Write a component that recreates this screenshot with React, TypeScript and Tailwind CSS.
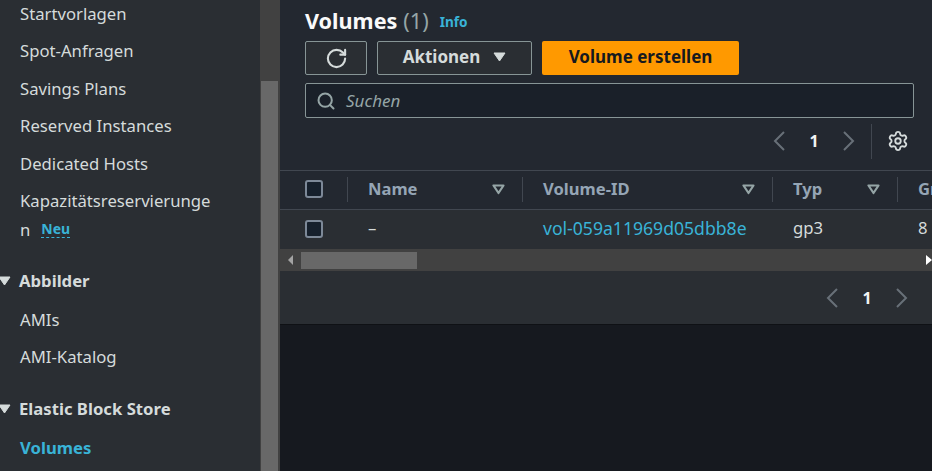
import React from "react";
import { RotateCw, Search, Settings } from "lucide-react";

const navTop = ["Startvorlagen", "Spot-Anfragen", "Savings Plans", "Reserved Instances", "Dedicated Hosts"];

const Caret = () => (
  <svg width="13" height="10" viewBox="0 0 13 10" className="shrink-0">
    <path d="M1 1h11L6.5 9z" fill="#d5dbdb" stroke="#d5dbdb" />
  </svg>
);

const SortIcon = () => (
  <svg width="13" height="11" viewBox="0 0 13 11" className="shrink-0">
    <path d="M1.5 1.5h10L6.5 9z" fill="none" stroke="#95a5a6" strokeWidth="2.2" strokeLinejoin="round" />
  </svg>
);

const Pager = () => (
  <div className="flex items-center text-[#687078]">
    <svg width="12" height="20" viewBox="0 0 12 20" fill="none" stroke="currentColor" strokeWidth="2">
      <path d="M11 1 2 10l9 9" />
    </svg>
    <span className="w-[58px] text-center text-[16px] font-bold text-[#f2f3f3]">1</span>
    <svg width="12" height="20" viewBox="0 0 12 20" fill="none" stroke="currentColor" strokeWidth="2">
      <path d="m1 1 9 9-9 9" />
    </svg>
  </div>
);

const Checkbox = () => (
  <div className="h-[18px] w-[18px] rounded-[3px] border-2 border-[#7d8998] bg-[#16202c]" />
);

const HeaderCell = ({ label, width }: { label: string; width: string }) => (
  <div className={`flex h-[25px] shrink-0 items-center justify-between border-r border-[#414750] pl-5 pr-[17px] ${width}`}>
    <span className="text-[16.6px] font-bold text-[#95a5b5]">{label}</span>
    <SortIcon />
  </div>
);

export default function App() {
  return (
    <div className="flex h-[471px] w-[932px] overflow-hidden bg-[#16191f] font-['Noto_Sans',sans-serif] text-[16.7px] text-[#d5dbdb]">
      <aside className="h-full w-[260px] shrink-0 bg-[#2a2e33]">
        <ul className="flex flex-col pl-5 pt-[0.9px]">
          {navTop.map((item) => (
            <li key={item} className="h-[37.5px] leading-[26px]">{item}</li>
          ))}
        </ul>
        <div className="-mt-[2.4px] pl-5 leading-[29px]">
          <div>Kapazitätsreservierunge</div>
          <div className="flex items-center gap-[11px]">
            <span>n</span>
            <span className="border-b border-dashed border-[#39b3d7] text-[14px] font-bold leading-[16px] text-[#39b3d7]">Neu</span>
          </div>
        </div>
        <div className="mt-[23.5px] flex h-[26px] items-center gap-[7px] font-bold">
          <span className="-ml-[2px]"><Caret /></span>
          <span className="pl-[1px]">Abbilder</span>
        </div>
        <div className="flex flex-col pl-5 pt-[13.6px]">
          <div className="h-[36.7px] leading-[26px]">AMIs</div>
          <div className="h-[37.5px] leading-[26px]">AMI-Katalog</div>
        </div>
        <div className="mt-[14.7px] flex h-[26px] items-center gap-[8px] font-bold">
          <span className="-ml-[2px]"><Caret /></span>
          <span>Elastic Block Store</span>
        </div>
        <div className="pl-5 pt-[13px] font-bold leading-[26px] text-[#39b3d7]">Volumes</div>
      </aside>

      <div className="flex h-full w-5 shrink-0 flex-col bg-[#414141]">
        <div className="h-[81px]" />
        <div className="ml-[1px] w-[17px] flex-1 bg-[#686868]" />
      </div>

      <main className="min-w-0 flex-1">
        <div className="h-[325px] overflow-hidden border-b border-[#0f1115] bg-[#2a2e33]">
          <section className="h-[170px] bg-[#232830] pl-[25px] pr-[18px] pt-[6px]">
            <div className="flex h-[32px] items-center pb-[2px]">
              <h1 className="text-[21.6px] font-bold text-[#fafafa]">Volumes</h1>
              <span className="ml-[6px] text-[21.6px] text-[#95a5a6]">(1)</span>
              <span className="ml-[11px] pt-[3px] text-[13.6px] font-bold text-[#39b3d7]">Info</span>
            </div>
            <div className="mt-[3px] flex h-[34px] gap-[10px]">
              <button className="flex w-[62px] items-center justify-center rounded-[2px] border border-[#879596] bg-[#2a2e33] text-[#d5dbdb]">
                <RotateCw size={23} strokeWidth={2.2} />
              </button>
              <button className="flex w-[155px] items-center justify-center gap-[13px] rounded-[2px] border border-[#879596] bg-[#2a2e33] pb-[2px] text-[17px] font-bold text-[#d5dbdb]">
                Aktionen
                <Caret />
              </button>
              <button className="w-[197px] rounded-[2px] bg-[#ff9900] pb-[2px] text-[17px] font-bold text-[#16191f]">
                Volume erstellen
              </button>
            </div>
            <div className="mt-[8px] flex h-[35px] items-center gap-[10px] rounded-[2px] border border-[#879596] bg-[#1a2029] pl-[10px] text-[#95a5a6]">
              <Search size={20} strokeWidth={2.4} />
              <span className="text-[17px] italic">Suchen</span>
            </div>
            <div className="mt-[5px] flex h-[36px] items-center justify-end pr-[5px]">
              <Pager />
              <div className="ml-[16px] flex h-[35px] w-[38px] items-center justify-end border-l border-[#414750]">
                <Settings size={22} strokeWidth={2} className="text-[#d5dbdb]" />
              </div>
            </div>
          </section>

          <div className="overflow-hidden border-t border-[#414750]">
            <div className="flex h-[39px] items-center border-b border-[#414750] bg-[#232830] pb-[2px]">
              <div className="flex h-[25px] w-[68px] shrink-0 items-center border-r border-[#414750] pl-[25px]">
                <Checkbox />
              </div>
              <HeaderCell label="Name" width="w-[175px]" />
              <HeaderCell label="Volume-ID" width="w-[250px]" />
              <HeaderCell label="Typ" width="w-[125px]" />
              <span className="pl-5 text-[16.6px] font-bold text-[#95a5b5]">Größe</span>
            </div>
            <div className="flex h-[39px] items-center whitespace-nowrap bg-[#2a2e33] pb-[2px]">
              <div className="w-[68px] shrink-0 pl-[25px]"><Checkbox /></div>
              <div className="w-[175px] shrink-0 pb-[1px] pl-5">–</div>
              <div className="w-[250px] shrink-0 pb-[1px] pl-5 text-[17.6px] text-[#39b3d7]">vol-059a11969d05dbb8e</div>
              <div className="w-[125px] shrink-0 pb-[1px] pl-5">gp3</div>
              <div className="pb-[1px] pl-5">8</div>
            </div>
            <div className="flex h-[22px] items-center bg-[#414141]">
              <svg width="6" height="10" viewBox="0 0 6 10" className="ml-[8px] shrink-0">
                <path d="M5 0v10L0 5z" fill="#a3a3a3" />
              </svg>
              <div className="ml-[7px] h-[17px] w-[116px] bg-[#686868]" />
              <svg width="6" height="10" viewBox="0 0 6 10" className="ml-auto shrink-0">
                <path d="M0 0v10l6-5z" fill="#ffffff" />
              </svg>
            </div>
            <div className="flex h-[55px] items-center justify-end pb-[2px] pr-[24px]">
              <Pager />
            </div>
          </div>
        </div>
      </main>
    </div>
  );
}
